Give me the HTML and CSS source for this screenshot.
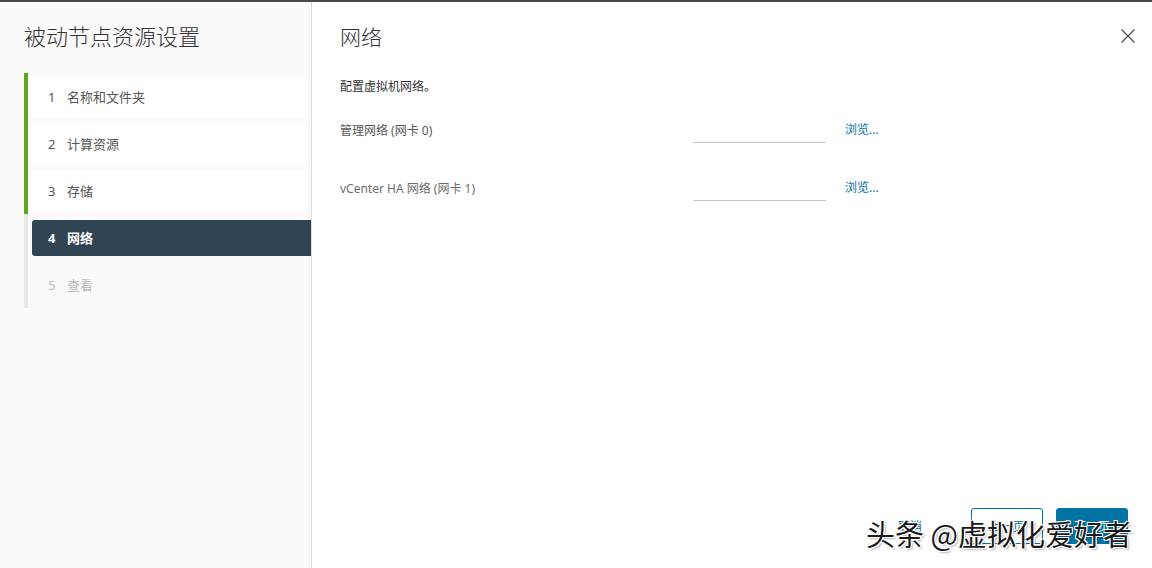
FILE: index.html
```html
<!DOCTYPE html>
<html lang="zh">
<head>
    <meta charset="UTF-8">
    <title>被动节点资源设置</title>
    <link rel="stylesheet" href="styles.css">
</head>
<body>
    <div class="wizard">
        <!-- 左侧步骤 -->
        <div class="sidebar">
            <h1 class="wizard-title">被动节点资源设置</h1>
            <div class="steps">
                <div class="step done"><div class="step-box"><span class="num">1</span>名称和文件夹</div></div>
                <div class="step done"><div class="step-box"><span class="num">2</span>计算资源</div></div>
                <div class="step done"><div class="step-box"><span class="num">3</span>存储</div></div>
                <div class="step active"><div class="step-box"><span class="num">4</span>网络</div></div>
                <div class="step disabled"><div class="step-box"><span class="num">5</span>查看</div></div>
            </div>
        </div>

        <!-- 右侧内容 -->
        <div class="content">
            <div class="content-header">
                <h2 class="page-title">网络</h2>
                <svg class="close-icon" width="16" height="16" viewBox="0 0 16 16">
                    <path d="M1.5 1.5 L14.5 14.5 M14.5 1.5 L1.5 14.5" stroke="#565656" stroke-width="1.4" fill="none"/>
                </svg>
            </div>
            <p class="intro">配置虚拟机网络。</p>

            <div class="form-row">
                <label class="form-label">管理网络 (网卡 0)</label>
                <div class="form-input"></div>
                <a class="browse">浏览...</a>
            </div>
            <div class="form-row light">
                <label class="form-label">vCenter HA 网络 (网卡 1)</label>
                <div class="form-input"></div>
                <a class="browse">浏览...</a>
            </div>

            <div class="footer">
                <button class="btn btn-flat">取消</button>
                <button class="btn btn-outline">上一页</button>
                <button class="btn btn-primary">下一页</button>
            </div>
        </div>
    </div>

    <div class="watermark">头条 @虚拟化爱好者</div>
</body>
</html>
```

FILE: styles.css
```css
/* 基础样式 */
body {
    margin: 0;
    padding: 0;
    font-family: 'Noto Sans', 'Noto Sans CJK SC', sans-serif;
    background: #fff;
    color: #565656;
    overflow: hidden;
}

.wizard {
    display: flex;
    height: 568px;
    box-sizing: border-box;
    border-top: 2px solid #4a4a4a;
}

/* 侧边栏 */
.sidebar {
    flex-shrink: 0;
    background: #fafafa;
    border-right: 1px solid #dddddd;
    padding-left: 24px;
    width: 287px;
}

.wizard-title {
    margin: 0;
    padding-top: 19px;
    height: 52px;
    font-size: 22px;
    font-weight: 300;
    color: #333;
    line-height: 30px;
}

.steps {
    display: flex;
    flex-direction: column;
}

.step {
    height: 47px;
    border-left: 4px solid #e8e8e8;
    box-sizing: border-box;
    display: flex;
    flex-direction: column;
    justify-content: center;
}

.step.done {
    border-left-color: #62a420;
}

.step-box {
    height: 40px;
    margin-right: 3px;
    background: #fff;
    display: flex;
    align-items: center;
    padding-left: 20px;
    font-size: 13px;
    color: #565656;
}

.num {
    width: 19px;
}

.step.active .step-box {
    height: 36px;
    margin: 0 0 0 4px;
    padding-left: 16px;
    background: #2f4553;
    border-radius: 3px 0 0 3px;
    color: #fff;
    font-weight: 700;
}

.step.disabled .step-box {
    background: transparent;
    color: #bbb;
}

/* 内容区 */
.content {
    flex: 1;
    position: relative;
    padding: 0 16px 0 28px;
}

.content-header {
    display: flex;
    justify-content: space-between;
    align-items: center;
    height: 68px;
    margin-bottom: 4px;
}

.page-title {
    margin: 0;
    font-size: 21px;
    font-weight: 300;
    color: #333;
}

.intro {
    margin: 0;
    font-size: 12px;
    color: #333;
    line-height: 26px;
}

.form-row {
    display: flex;
    align-items: center;
    height: 58px;
    font-size: 12px;
    margin-top: 1px;
}

.form-row + .form-row {
    margin-top: 0;
}

.form-label {
    width: 353px;
    color: #565656;
}

.form-row.light .form-label {
    color: #6d6d6d;
}

.form-input {
    width: 133px;
    height: 24px;
    border-bottom: 1px solid #c8c8c8;
}

.browse {
    margin-left: 19px;
    color: #0072a3;
    font-size: 12px;
    margin-top: -2px;
}

/* 底部按钮 */
.footer {
    position: absolute;
    right: 24px;
    bottom: 24px;
    display: flex;
    gap: 13px;
}

.btn {
    height: 36px;
    border-radius: 3px;
    font-family: 'Noto Sans', 'Noto Sans CJK SC', sans-serif;
    font-size: 12px;
    padding: 0 12px;
    min-width: 72px;
    cursor: pointer;
}

.btn-flat {
    background: transparent;
    border: none;
    color: #0072a3;
    margin-right: 12px;
}

.btn-outline {
    background: #fff;
    border: 1px solid #0072a3;
    color: #0072a3;
    width: 72px;
}

.btn-primary {
    background: #0072a3;
    border: 1px solid #0072a3;
    color: #fff;
}

/* 水印 */
.watermark {
    position: absolute;
    left: 866px;
    top: 512px;
    font-family: 'Noto Sans CJK SC', sans-serif;
    font-size: 29px;
    color: #1a1a1a;
    text-shadow: 1px 1px 0 #fff, -1px -1px 0 #fff, 1px -1px 0 #fff, -1px 1px 0 #fff, 2px 2px 2px rgba(0, 0, 0, 0.3);
}
```
